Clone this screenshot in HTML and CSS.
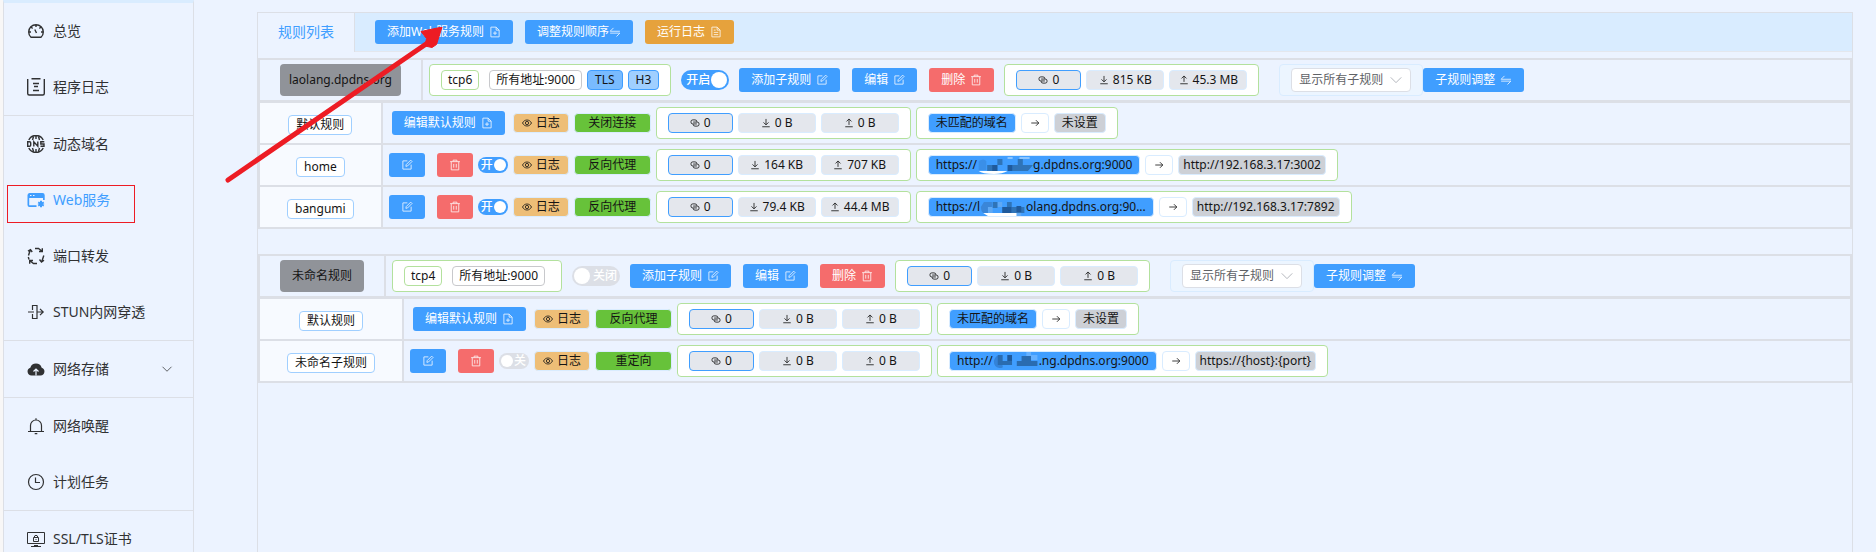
FILE: index.html
```html
<!DOCTYPE html>
<html lang="zh-CN">
<head>
<meta charset="utf-8">
<title>Web服务</title>
<link rel="stylesheet" href="styles.css">
</head>
<body>
<svg class="sprite" aria-hidden="true">
  <symbol id="i-edit" viewBox="0 0 16 16"><path d="M8.5 2.5h-6v11h11v-6M6.5 9.8l.4-2.3 6-6 1.8 1.8-6 6z"/></symbol>
  <symbol id="i-trash" viewBox="0 0 16 16"><path d="M1.5 3.5h13M5.5 3.500V1.500h5v2M3 3.500v11h10v-11M6.300 6.500v5M9.700 6.500v5"/></symbol>
  <symbol id="i-docadd" viewBox="0 0 16 16"><path d="M9.500 1.500h-7v13h11v-9zM9.500 1.500v4h4M8 7v5M5.500 9.500h5"/></symbol>
  <symbol id="i-doc" viewBox="0 0 16 16"><path d="M9.500 1.500h-7v13h11v-9zM9.500 1.500v4h4M5 5.500h2.500M5 8.500h6M5 11.500h6"/></symbol>
  <symbol id="i-switch" viewBox="0 0 16 16"><path d="M6 2.500 1.500 7h13M1.500 9.500h13L10 14"/></symbol>
  <symbol id="i-eye" viewBox="0 0 16 16"><path d="M.8 8C2.500 4.800 5 3.200 8 3.200S13.500 4.800 15.200 8C13.500 11.200 11 12.800 8 12.800S2.500 11.200.8 8z"/><circle cx="8" cy="8" r="2.600"/></symbol>
  <symbol id="i-link" viewBox="0 0 16 16"><path d="M11 9.500H4.500a3 3 0 0 1-3-3v-.500a3 3 0 0 1 3-3H8a3 3 0 0 1 3 3M5 6.500h6.500a3 3 0 0 1 3 3v.500a3 3 0 0 1-3 3H8a3 3 0 0 1-3-3"/></symbol>
  <symbol id="i-down" viewBox="0 0 16 16"><path d="M8 1.500v9M4 7l4 4 4-4M2 14h12"/></symbol>
  <symbol id="i-up" viewBox="0 0 16 16"><path d="M8 11V2M4 5.500l4-4 4 4M2 14h12"/></symbol>
  <symbol id="i-arrow" viewBox="0 0 16 16"><path d="M2 8h12M9.500 3.500 14 8l-4.500 4.500"/></symbol>
  <symbol id="i-chev" viewBox="0 0 16 16"><path d="M2 5l6 6 6-6"/></symbol>
</svg>

<div class="layout">
  <aside class="sidebar">
    <nav>
      <a class="item" href="#"><svg viewBox="0 0 18 18"><path class="thick" d="M4 15.200h10c1.500-1.300 2.300-3.100 2.300-5.200a7.300 7.300 0 0 0-14.600 0c0 2.100.8 3.900 2.300 5.200zM9 3v2M4.300 5.300l1.300 1.200M13.700 5.300l-1.300 1.200M2 10h2M14 10h2M7.800 7.500 9.500 11"/></svg>总览</a>
      <a class="item" href="#"><svg viewBox="0 0 18 18"><path d="M.7 1v14.500q0 1.500 1.500 1.500h13.600q1.500 0 1.500-1.500V1M4.500.8h9M6 5.500h6M7 8.500h4M6 12.500h6" class="thick"/></svg>程序日志</a>
      <a class="item divided" href="#"><svg viewBox="0 0 18 18"><path class="thick" d="M1.800 5a8 8 0 0 1 14.400 0M1.800 13a8 8 0 0 0 14.400 0M5.500 5 6.500 1.500M12.500 5l-1-3.500M5.500 13l1 3.500M12.500 13l-1 3.500M9 1v3M9 14v3"/><path class="thick" d="M.7 6.800v4.400h1.800q1.200 0 1.200-1V7.800q0-1-1.200-1zM6.800 11.500V6.800l4 4.400V6.500M17.300 6.800h-3.500v2.200h3.200v2.300h-3.500"/></svg>动态域名</a>
      <a class="item active" href="#"><svg viewBox="0 0 18 18"><path class="solid" d="M2.500 2h13A2.200 2.200 0 0 1 17.700 4.200V9H16V7H2.200v7.300h7.300V16H2.500A2 2 0 0 1 .5 14V4.200A2.200 2.200 0 0 1 2.500 2z"/><path class="hole" d="M3 4.500h1.500M6 4.500h1.500"/><path class="bold" d="M14 9.700v6.600M11.200 11.400l5.600 3.200M16.800 11.400l-5.600 3.200"/></svg>Web服务</a>
      <a class="item" href="#"><svg viewBox="0 0 18 18"><path class="thick" d="M1.500 8.500 3.200 3M1 4.200 3.500 2.600 5.200 5M8 1.500h3.500L14.800 4M15.300 1.300V4.500H12M16.800 8.500 15 14M12.500 12.500 14.500 15l2.500-1.800M10 16.500H6.500L3.200 14M2.700 16.800v-3.300H6M1.300 10l.7 2.500"/></svg>端口转发</a>
      <a class="item" href="#"><svg viewBox="0 0 18 18"><path class="mid" d="M5.500 7V2.500h4.500V15.500H5.500V11M1 9h6M9.500 9h6.500M13 5.800 16.200 9 13 12.200"/></svg>STUN内网穿透</a>
      <a class="item divided" href="#"><svg viewBox="0 0 18 18"><path class="solid" d="M4.500 15.500A4 4 0 0 1 3.300 7.700 6 6 0 0 1 14.700 7.700 4 4 0 0 1 13.500 15.500z"/><path class="hole" d="M9 15.500V9.500M6.500 11.500 9 9l2.500 2.500"/></svg>网络存储<svg class="caret"><use href="#i-chev"/></svg></a>
      <a class="item divided" href="#"><svg viewBox="0 0 18 18"><path d="M3.500 14.500V8.500a5.500 5.500 0 0 1 11 0v6M1 14.500h16M9 3V1.200M7.700 16.700h2.600" class="mid"/></svg>网络唤醒</a>
      <a class="item" href="#"><svg viewBox="0 0 18 18"><circle class="mid" cx="9" cy="9" r="7.500"/><path class="mid" d="M8.500 4.500v5H13"/></svg>计划任务</a>
      <a class="item divided" href="#"><svg viewBox="0 0 18 18"><path d="M.5 2.500h17v11H.5zM6.500 7.500h5v4h-5zM7.500 7.500V6q1.500-1.500 3 0v1.500M9 9v1M4 16.500h10M7 15.500h4"/></svg>SSL/TLS证书</a>
    </nav>
  </aside>

  <main class="main">
    <section class="panel">
      <header class="tabs">
        <a class="tab" href="#">规则列表</a>
        <div class="tools">
          <button class="btn">添加Web服务规则<svg><use href="#i-docadd"/></svg></button>
          <button class="btn tight">调整规则顺序<svg><use href="#i-switch"/></svg></button>
          <button class="btn warn">运行日志<svg><use href="#i-doc"/></svg></button>
        </div>
      </header>

      <div class="rule">
        <table class="grid head">
          <tr>
            <th><span class="name">laolang.dpdns.org</span></th>
            <td><div class="row">
              <div class="box addr"><span class="tag green">tcp6</span><span class="tag gray first">所有地址:9000</span><span class="tag tls">TLS</span><span class="tag h3">H3</span></div>
              <label class="switch big"><input type="checkbox" checked><span>开启</span></label>
              <div class="btns"><button class="btn">添加子规则<svg><use href="#i-edit"/></svg></button><button class="btn">编辑<svg><use href="#i-edit"/></svg></button><button class="btn danger">删除<svg><use href="#i-trash"/></svg></button></div>
              <div class="box"><span class="tag conn"><svg><use href="#i-link"/></svg>0</span><span class="tag stat"><svg><use href="#i-down"/></svg>815 KB</span><span class="tag stat"><svg><use href="#i-up"/></svg>45.3 MB</span></div>
              <div class="filter">
                <div class="box pale"><div class="select"><select aria-label="子规则筛选"><option>显示所有子规则</option></select><svg><use href="#i-chev"/></svg></div></div>
                <button class="btn">子规则调整<svg><use href="#i-switch"/></svg></button>
              </div>
            </div></td>
          </tr>
        </table>
        <table class="grid subs">
          <tr>
            <th><span class="tag label">默认规则</span></th>
            <td><div class="row sub">
              <div class="ops"><button class="btn">编辑默认规则<svg><use href="#i-docadd"/></svg></button></div>
              <span class="tag log"><svg><use href="#i-eye"/></svg>日志</span><span class="tag kind">关闭连接</span>
              <div class="box"><span class="tag conn"><svg><use href="#i-link"/></svg>0</span><span class="tag stat"><svg><use href="#i-down"/></svg>0 B</span><span class="tag stat"><svg><use href="#i-up"/></svg>0 B</span></div>
              <div class="box"><span class="tag from">未匹配的域名</span><span class="tag to"><svg><use href="#i-arrow"/></svg></span><span class="tag dest">未设置</span></div>
            </div></td>
          </tr>
          <tr>
            <th><span class="tag label">home</span></th>
            <td><div class="row sub">
              <div class="ops"><button class="btn icon" aria-label="编辑"><svg><use href="#i-edit"/></svg></button><button class="btn icon danger" aria-label="删除"><svg><use href="#i-trash"/></svg></button><label class="switch"><input type="checkbox" checked><span>开</span></label></div>
              <span class="tag log"><svg><use href="#i-eye"/></svg>日志</span><span class="tag kind">反向代理</span>
              <div class="box"><span class="tag conn"><svg><use href="#i-link"/></svg>0</span><span class="tag stat"><svg><use href="#i-down"/></svg>164 KB</span><span class="tag stat"><svg><use href="#i-up"/></svg>707 KB</span></div>
              <div class="box"><span class="tag from">https://<svg class="mask" viewBox="0 0 66 18" preserveAspectRatio="none"><path fill="#fff" d="M2 15h34q-6 3-16 3-14 0-18-3z"/><path fill="#3a8fe8" d="M2 5q6-3 9 0v9H2z"/><path fill="#2f74b8" d="M12 9h12v6H12zM24 3h6v6h-6zM48 3h6v6h-6zM42 9h24l-6 6H42z"/><path fill="#1f5a9c" d="M18 9h6v6h-6zM36 9h6v6h-6z"/><path fill="#8cc5ff" d="M36 1h6v2h-6zM50 1h12v2H50z"/></svg>g.dpdns.org:9000</span><span class="tag to"><svg><use href="#i-arrow"/></svg></span><span class="tag dest">http://192.168.3.17:3002</span></div>
            </div></td>
          </tr>
          <tr>
            <th><span class="tag label">bangumi</span></th>
            <td><div class="row sub">
              <div class="ops"><button class="btn icon" aria-label="编辑"><svg><use href="#i-edit"/></svg></button><button class="btn icon danger" aria-label="删除"><svg><use href="#i-trash"/></svg></button><label class="switch"><input type="checkbox" checked><span>开</span></label></div>
              <span class="tag log"><svg><use href="#i-eye"/></svg>日志</span><span class="tag kind">反向代理</span>
              <div class="box"><span class="tag conn"><svg><use href="#i-link"/></svg>0</span><span class="tag stat"><svg><use href="#i-down"/></svg>79.4 KB</span><span class="tag stat"><svg><use href="#i-up"/></svg>44.4 MB</span></div>
              <div class="box"><span class="tag from">https://l<svg class="mask short" viewBox="0 0 58 18" preserveAspectRatio="none"><path fill="#fff" d="M4 15h46v3H10z"/><path fill="#3a86d8" d="M1 9l4-5h10v11H4q-3-2-3-6z"/><path fill="#5fa9f5" d="M10 9h6v6h-6zM22 4h6v5h-6zM46 14h6v4h-6z"/><path fill="#2f74b8" d="M16 4h6v6h-6zM34 4h6v5h-6zM40 9h16v6H40z"/><path fill="#1f5a9c" d="M28 9h12v6H28zM46 8h6v6h-6z"/></svg>olang.dpdns.org:90...</span><span class="tag to"><svg><use href="#i-arrow"/></svg></span><span class="tag dest">http://192.168.3.17:7892</span></div>
            </div></td>
          </tr>
        </table>
      </div>

      <div class="rule">
        <table class="grid head">
          <tr>
            <th><span class="name">未命名规则</span></th>
            <td><div class="row">
              <div class="box addr"><span class="tag green">tcp4</span><span class="tag gray first last">所有地址:9000</span></div>
              <label class="switch big"><input type="checkbox"><span>关闭</span></label>
              <div class="btns"><button class="btn">添加子规则<svg><use href="#i-edit"/></svg></button><button class="btn">编辑<svg><use href="#i-edit"/></svg></button><button class="btn danger">删除<svg><use href="#i-trash"/></svg></button></div>
              <div class="box"><span class="tag conn"><svg><use href="#i-link"/></svg>0</span><span class="tag stat"><svg><use href="#i-down"/></svg>0 B</span><span class="tag stat"><svg><use href="#i-up"/></svg>0 B</span></div>
              <div class="filter">
                <div class="box pale"><div class="select"><select aria-label="子规则筛选"><option>显示所有子规则</option></select><svg><use href="#i-chev"/></svg></div></div>
                <button class="btn">子规则调整<svg><use href="#i-switch"/></svg></button>
              </div>
            </div></td>
          </tr>
        </table>
        <table class="grid subs">
          <tr>
            <th><span class="tag label">默认规则</span></th>
            <td><div class="row sub">
              <div class="ops"><button class="btn">编辑默认规则<svg><use href="#i-docadd"/></svg></button></div>
              <span class="tag log"><svg><use href="#i-eye"/></svg>日志</span><span class="tag kind">反向代理</span>
              <div class="box"><span class="tag conn"><svg><use href="#i-link"/></svg>0</span><span class="tag stat"><svg><use href="#i-down"/></svg>0 B</span><span class="tag stat"><svg><use href="#i-up"/></svg>0 B</span></div>
              <div class="box"><span class="tag from">未匹配的域名</span><span class="tag to"><svg><use href="#i-arrow"/></svg></span><span class="tag dest">未设置</span></div>
            </div></td>
          </tr>
          <tr>
            <th><span class="tag label">未命名子规则</span></th>
            <td><div class="row sub">
              <div class="ops"><button class="btn icon" aria-label="编辑"><svg><use href="#i-edit"/></svg></button><button class="btn icon danger" aria-label="删除"><svg><use href="#i-trash"/></svg></button><label class="switch"><input type="checkbox"><span>关</span></label></div>
              <span class="tag log"><svg><use href="#i-eye"/></svg>日志</span><span class="tag kind">重定向</span>
              <div class="box"><span class="tag conn"><svg><use href="#i-link"/></svg>0</span><span class="tag stat"><svg><use href="#i-down"/></svg>0 B</span><span class="tag stat"><svg><use href="#i-up"/></svg>0 B</span></div>
              <div class="box"><span class="tag from">http://<svg class="mask short" viewBox="0 0 58 18" preserveAspectRatio="none"><path fill="#3483d8" d="M1 9q2-6 8-6h3v11q2 2-4 2-7-1-7-7z"/><path fill="#2a6cb0" d="M6 3h6v6H6zM6 9h18v4H6zM36 4h12v5H36zM30 9h26v5H30z"/><path fill="#1f5a9c" d="M18 3h6v6h-6z"/><path fill="#66b1ff" d="M42 0h6v4h-6zM48 3h8v5h-8z"/></svg>.ng.dpdns.org:9000</span><span class="tag to"><svg><use href="#i-arrow"/></svg></span><span class="tag dest">https://{host}:{port}</span></div>
            </div></td>
          </tr>
        </table>
      </div>
    </section>
  </main>
</div>

<div class="callout"></div>
<svg class="pointer" viewBox="0 0 220 160" aria-hidden="true"><path class="shaft" d="M4 153 205 15"/><path class="tip" d="M218 0 197 4.500 202.500 11.500 201 19 208 20.500 212.500 17.500z"/></svg>
</body>
</html>
```
FILE: styles.css
```css
* { box-sizing: border-box; }

body {
  margin: 0;
  font: 12px/18px "Noto Sans", "Noto Sans CJK SC", sans-serif;
  color: #141414;
  background: #ecf3ff;
}

.sprite { position: absolute; width: 0; height: 0; }

svg { fill: none; stroke: currentColor; stroke-width: 1; flex: none; }

.layout {
  display: flex;
  height: 100vh;
  overflow: hidden;
  border-left: 3px solid #f8f7f7;
}

.sidebar {
  flex: none;
  width: 191px;
  border: 1px solid #dcdfe6;
  border-top: 3px solid #d9ecff;
  border-bottom: 0;
}

.item {
  display: flex;
  align-items: center;
  gap: 8px;
  height: 56px;
  padding: 0 20px 0 23px;
  font-size: 14px;
  color: #303133;
  text-decoration: none;
}
.item svg { width: 18px; height: 18px; }
.item .caret { width: 12px; height: 12px; margin-left: auto; }
.item.divided { height: 57px; border-top: 1px solid #dcdfe6; }
.item.active { color: #409eff; }
.item .thick { stroke-width: 1.4; }
.item .mid { stroke-width: 1.2; }
.item .bold { stroke-width: 2; }
.item .solid { fill: currentColor; stroke: none; }
.item .hole { stroke: #ecf3ff; stroke-width: 1.2; }

.main { flex: 1; min-width: 0; padding: 12px 23px 0 63px; }

.panel {
  height: 100%;
  border: 1px solid #dcdfe6;
  border-bottom: 0;
}

.tabs {
  display: flex;
  height: 39px;
  margin-bottom: 6px;
  background: #d9ecff;
  border-bottom: 1px solid #e4e7ed;
}
.tab {
  height: 39px;
  padding: 0 20px;
  line-height: 38px;
  font-size: 14px;
  color: #409eff;
  text-decoration: none;
  background: #ecf3ff;
  border-right: 1px solid #dcdfe6;
}
.tools { display: flex; align-items: center; gap: 12px; padding-left: 20px; }

.btn {
  display: inline-flex;
  align-items: center;
  justify-content: center;
  gap: 5px;
  height: 24px;
  padding: 0 12px;
  font: 400 12px/18px "Noto Sans", "Noto Sans CJK SC", sans-serif;
  color: #fff;
  white-space: nowrap;
  background: #409eff;
  border: 0;
  border-radius: 3px;
}
.btn svg { width: 12px; height: 12px; stroke-width: 1.2; opacity: .85; }
.btn.tight { gap: 0; }
.btn.warn { background: #e6a23c; }
.btn.danger { background: #f56c6c; }
.btn.icon { width: 36px; padding: 0; }

.rule { margin-bottom: 25px; }

.grid { width: 100%; border-collapse: collapse; }
.grid th, .grid td { border: 2px solid #dcdfe6; }
.grid td { width: 100%; padding: 4px 6px; }
.grid th { padding: 0 20px; font-weight: 400; white-space: nowrap; }
.subs { margin-top: -1px; }
.subs th { padding: 4px 27px 0; background: #f7faff; }

.name {
  display: flex;
  align-items: center;
  justify-content: center;
  min-width: 84px;
  height: 32px;
  padding: 0 9px;
  background: #909399;
  border-radius: 4px;
}

.row { display: flex; align-items: center; gap: 10px; height: 32px; }
.row.sub { gap: 5px; }
.btns { display: flex; gap: 12px; }
.filter { display: flex; align-items: center; margin-left: 10px; }

.box {
  display: flex;
  align-items: center;
  gap: 5px;
  height: 32px;
  padding: 0 11px;
  background: #fff;
  border: 1px solid #b3e19d;
  border-radius: 4px;
}
.box.pale { background: #ecf5ff; border-color: #d9ecff; }

.tag {
  display: inline-flex;
  align-items: center;
  justify-content: center;
  gap: 4px;
  height: 20px;
  padding: 0 7px;
  white-space: nowrap;
  border: 1px solid #d9ecff;
  border-radius: 4px;
}
.tag svg { width: 10px; height: 10px; stroke-width: 1.3; }
.tag.green { padding: 0 6px; background: #fff; border-color: #b3e19d; }
.tag.gray { padding: 0 6px; background: #fff; border-color: #c8c9cc; }
.tag.first { margin-left: 5px; }
.tag.last { margin-right: 5px; }
.tag.tls { background: #79bbff; border-color: #409eff; }
.tag.h3 { background: #a0cfff; border-color: #409eff; }
.tag.label { background: #fff; border-color: #a0cfff; }
.tag.conn { width: 65px; background: #e4e7ed; border-color: #409eff; }
.tag.stat { width: 78px; background: #e4e7ed; }
.tag.log { width: 56px; background: #eebe77; }
.tag.kind { width: 77px; background: #67c23a; }
.tag.from { background: #409eff; gap: 0; }
.tag.to { width: 28px; padding: 0; background: #fff; }
.tag.dest { min-width: 52px; padding: 0 4px; background: #cdd0d6; }
.tag .mask { width: 56px; height: 18px; stroke: none; }
.tag .mask.short { width: 46px; }

.ops { display: flex; align-items: center; justify-content: center; width: 119px; }
.ops .btn + .btn { margin-left: 12px; }
.ops .switch { margin-left: 5px; }

.switch { display: grid; align-items: center; color: #fff; font-weight: 500; }
.switch input, .switch span { grid-area: 1 / 1; }
.switch span { padding-left: 3px; line-height: 16px; pointer-events: none; }
.switch input {
  appearance: none;
  display: flex;
  align-items: center;
  width: 30px;
  height: 16px;
  margin: 0;
  padding: 0 2px;
  background: #dcdfe6;
  border-radius: 10px;
}
.switch input::before {
  content: "";
  width: 12px;
  height: 12px;
  background: #fff;
  border-radius: 50%;
}
.switch input:checked { justify-content: flex-end; background: #409eff; }
.switch input:not(:checked) + span { padding: 0 3px; text-align: right; }
.switch.big input { width: 48px; height: 20px; }
.switch.big input::before { width: 16px; height: 16px; }
.switch.big span { padding-left: 5px; }

.select { display: grid; align-items: center; }
.select select, .select svg { grid-area: 1 / 1; }
.select select {
  appearance: none;
  width: 120px;
  height: 24px;
  padding: 0 7px;
  font: inherit;
  color: #606266;
  background: #fff;
  border: 1px solid #dcdfe6;
  border-radius: 4px;
}
.select svg {
  justify-self: end;
  width: 14px;
  height: 14px;
  margin-right: 8px;
  color: #a8abb2;
  pointer-events: none;
}

.callout {
  position: absolute;
  left: 7px;
  top: 185px;
  width: 128px;
  height: 38px;
  border: 1px solid #ed1c24;
  pointer-events: none;
}
.pointer {
  position: absolute;
  left: 224px;
  top: 27px;
  width: 220px;
  height: 160px;
  pointer-events: none;
}
.pointer .shaft { stroke: #ed1c24; stroke-width: 5; stroke-linecap: round; }
.pointer .tip { fill: #ed1c24; stroke: #ed1c24; }
```
